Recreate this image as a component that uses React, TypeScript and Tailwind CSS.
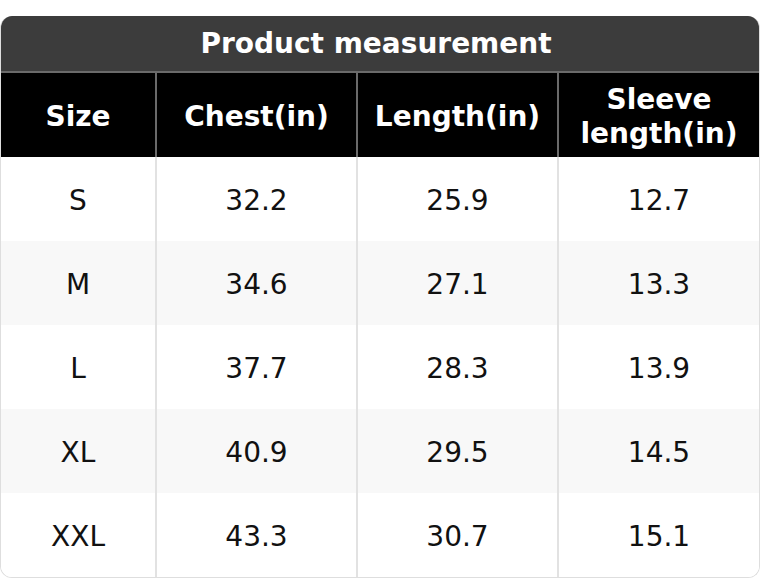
const headers = ['Size', 'Chest(in)', 'Length(in)', 'Sleeve length(in)']

const rows = [
  ['S', '32.2', '25.9', '12.7'],
  ['M', '34.6', '27.1', '13.3'],
  ['L', '37.7', '28.3', '13.9'],
  ['XL', '40.9', '29.5', '14.5'],
  ['XXL', '43.3', '30.7', '15.1'],
]

export default function App() {
  return (
    <div className="bg-white pt-4 font-['DejaVu_Sans',sans-serif]">
      <div className="overflow-hidden rounded-xl border-x border-b border-[#dedede]">
        {/* Title */}
        <div className="flex h-[57px] items-center justify-center border-b-2 border-[#6a6a6a] bg-[#3c3c3c] pr-2 text-[28px] font-bold text-white">
          Product measurement
        </div>

        {/* Header row */}
        <div className="grid h-[84px] grid-cols-[154px_201px_201px_1fr] bg-black text-white">
          {headers.map((h, i) => (
            <div
              key={h}
              className={`flex items-center justify-center px-2 pt-[3px] text-center text-[28px] font-bold leading-[1.18] ${
                i > 0 ? 'border-l-2 border-[#6a6a6a]' : ''
              }`}
            >
              {h === 'Sleeve length(in)' ? (
                <span>
                  Sleeve
                  <br />
                  length(in)
                </span>
              ) : (
                h
              )}
            </div>
          ))}
        </div>

        {/* Body rows */}
        {rows.map((row, r) => (
          <div
            key={row[0]}
            className={`grid h-[84px] grid-cols-[154px_201px_201px_1fr] ${
              r % 2 === 1 ? 'bg-[#f8f8f8]' : 'bg-white'
            }`}
          >
            {row.map((cell, i) => (
              <div
                key={i}
                className={`flex items-center justify-center pt-1 text-[28px] text-[#111] ${
                  i > 0 ? 'border-l-2 border-[#e2e2e2]' : ''
                }`}
              >
                {cell}
              </div>
            ))}
          </div>
        ))}
      </div>
    </div>
  )
}
